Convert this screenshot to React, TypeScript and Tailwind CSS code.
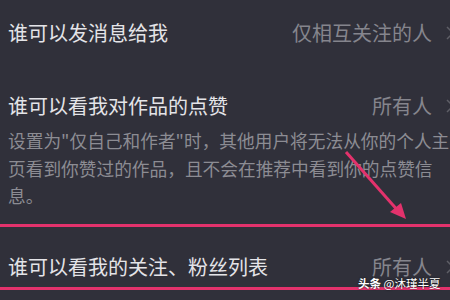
const font = { fontFamily: '"Noto Sans CJK SC", "Noto Sans", sans-serif' }

function Chevron() {
  return (
    <svg width="10" height="16" viewBox="0 0 10 16" className="ml-[13px] shrink-0">
      <path d="M2 2 L8 8 L2 14" fill="none" stroke="#5e5e66" strokeWidth="1.5" />
    </svg>
  )
}

function Row({ title, value, className }: { title: string; value: string; className: string }) {
  return (
    <div className={`flex h-[24px] w-[455px] shrink-0 items-center pl-2 ${className}`}>
      <span className="flex-1 whitespace-nowrap text-[20px] leading-[24px] text-[#e4e4e8]">{title}</span>
      <span className="whitespace-nowrap text-[20px] leading-[24px] text-[#85858d]">{value}</span>
      <Chevron />
    </div>
  )
}

export default function App() {
  return (
    <div
      className="relative h-[300px] w-[450px] overflow-hidden bg-[#30303a]"
      style={font}
    >
      <div className="flex flex-col">
        <Row title="谁可以发消息给我" value="仅相互关注的人" className="mt-[21px]" />
        <Row title="谁可以看我对作品的点赞" value="所有人" className="mt-[49px]" />
        <p className="mt-[9px] whitespace-nowrap pl-2 text-[17.7px] leading-[27.5px] text-[#8c8c93]">
          设置为"仅自己和作者"时，其他用户将无法从你的个人主
          <br />
          页看到你赞过的作品，且不会在推荐中看到你的点赞信
          <br />
          息。
        </p>
        <Row title="谁可以看我的关注、粉丝列表" value="所有人" className="mt-[45px]" />
      </div>

      {/* annotation overlay */}
      <div className="absolute left-0 top-[224px] h-[3px] w-full bg-[#e3326c]" />
      <div className="absolute left-0 top-[287px] h-[3px] w-full bg-[#e3326c]" />
      <svg className="absolute left-0 top-0" width="450" height="300">
        <line x1="346" y1="152" x2="400" y2="213" stroke="#e3326c" strokeWidth="3" />
        <path d="M390 212 L406 219 L401 203 Z" fill="#e3326c" />
      </svg>
      <div className="absolute left-[358px] top-[276px] whitespace-nowrap text-[11.5px] leading-[14px] text-white [text-shadow:0_0_2px_rgba(0,0,0,0.8)]">
        <span className="font-bold">头条</span> @沐瑾半夏
      </div>
    </div>
  )
}
